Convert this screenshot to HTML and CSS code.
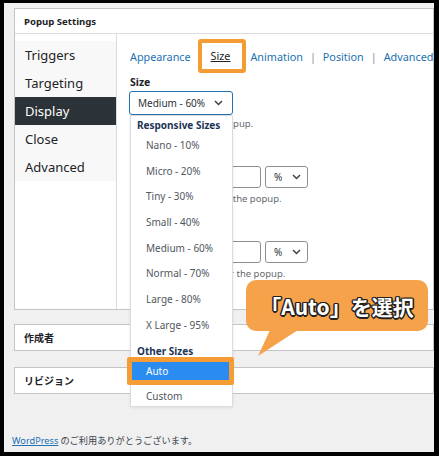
FILE: index.html
```html
<!DOCTYPE html>
<html lang="ja">
<head>
    <meta charset="UTF-8">
    <meta name="viewport" content="width=device-width, initial-scale=1.0">
    <title>Popup Settings</title>
    <link rel="stylesheet" href="styles.css">
</head>
<body>
<div class="screen">
    <div class="postbox settings">
        <div class="postbox-head">Popup Settings</div>
        <div class="settings-body">
            <ul class="side-tabs">
                <li>Triggers</li>
                <li>Targeting</li>
                <li class="active">Display</li>
                <li>Close</li>
                <li>Advanced</li>
            </ul>
            <div class="panel">
                <div class="sub-tabs">
                    <a>Appearance</a>
                    <a class="current">Size</a>
                    <a class="after-current">Animation</a>
                    <span class="sep">|</span>
                    <a>Position</a>
                    <span class="sep">|</span>
                    <a>Advanced</a>
                </div>

                <label class="field-label">Size</label>
                <div class="select-wrap">
                    <div class="select focused">
                        <span>Medium - 60%</span>
                        <svg class="chev" width="9" height="6" viewBox="0 0 9 6"><polyline points="1,1 4.5,4.5 8,1" fill="none" stroke="#3c434a" stroke-width="1.5"/></svg>
                    </div>
                    <ul class="dropdown">
                        <li class="group">Responsive Sizes</li>
                        <li>Nano - 10%</li>
                        <li>Micro - 20%</li>
                        <li>Tiny - 30%</li>
                        <li>Small - 40%</li>
                        <li>Medium - 60%</li>
                        <li>Normal - 70%</li>
                        <li>Large - 80%</li>
                        <li>X Large - 95%</li>
                        <li class="group">Other Sizes</li>
                        <li class="selected">Auto</li>
                        <li>Custom</li>
                    </ul>
                </div>
                <p class="desc">Choose a size of the popup.</p>

                <label class="field-label hidden-label">Width</label>
                <div class="unit-row">
                    <div class="text-input"></div>
                    <div class="select unit">
                        <span>%</span>
                        <svg class="chev" width="9" height="6" viewBox="0 0 9 6"><polyline points="1,1 4.5,4.5 8,1" fill="none" stroke="#3c434a" stroke-width="1.5"/></svg>
                    </div>
                </div>
                <p class="desc">Set a custom width for the popup.</p>

                <label class="field-label hidden-label">Height</label>
                <div class="unit-row">
                    <div class="text-input"></div>
                    <div class="select unit">
                        <span>%</span>
                        <svg class="chev" width="9" height="6" viewBox="0 0 9 6"><polyline points="1,1 4.5,4.5 8,1" fill="none" stroke="#3c434a" stroke-width="1.5"/></svg>
                    </div>
                </div>
                <p class="desc">Set a custom height for the popup.</p>
            </div>
        </div>
    </div>

    <div class="postbox small-box"><h3>作成者</h3></div>
    <div class="postbox small-box"><h3>リビジョン</h3></div>

    <p class="footer"><a>WordPress</a> のご利用ありがとうございます。</p>

    <div class="callout">
        <span>「Auto」を選択</span>
        <svg class="tail" width="44" height="28" viewBox="0 0 44 28"><polygon points="14,0 42,0 2,26" fill="#f6a24a"/></svg>
    </div>
</div>
</body>
</html>
```

FILE: styles.css
```css
* {
    box-sizing: border-box;
}
body {
    margin: 0;
    font-family: "Noto Sans", "Noto Sans CJK JP", sans-serif;
    color: #1d2327;
    background: #000;
}
.screen {
    position: relative;
    width: 439px;
    height: 456px;
    overflow: hidden;
    background-color: #f0f0f1;
    border-style: solid;
    border-color: #000;
    border-width: 3px 5px 4px 4px;
    padding: 5px 0 0 10px;
}
.postbox {
    background-color: #fff;
    border: 1px solid #c3c4c7;
}
.postbox-head {
    height: 25px;
    padding-left: 9px;
    font-size: 9.6px;
    font-weight: 700;
    line-height: 26px;
    border-bottom: 1px solid #dcdcde;
}
.settings-body {
    display: flex;
    height: 275px;
}
.side-tabs {
    flex-shrink: 0;
    list-style: none;
    margin: 0;
    padding: 7px 0 0;
    width: 102px;
    border-right: 1px solid #dcdcde;
}
.side-tabs li {
    height: 28px;
    line-height: 28px;
    padding-left: 10px;
    font-size: 13px;
    background-color: #f8f8f8;
}
.side-tabs li.active {
    background-color: #2c3338;
    color: #fff;
}
.panel {
    flex: 1;
    min-width: 0;
    position: relative;
    padding: 5px 0 0 13px;
}
.sub-tabs {
    display: flex;
    align-items: center;
    height: 34px;
    overflow: hidden;
    font-size: 10.8px;
    white-space: nowrap;
}
.sub-tabs a {
    color: #2271b1;
}
.sub-tabs .sep {
    color: #8c8f94;
    margin: 0 7px;
}
.sub-tabs a.current {
    margin-left: 7px;
    padding: 4px 12px 4px 9px;
    border: 4px solid #f59c35;
    border-radius: 3px;
    color: #1d2327;
    text-decoration: underline;
    line-height: 18px;
}
.sub-tabs a.after-current {
    margin-left: 4px;
}
.field-label {
    display: block;
    margin-top: 2px;
    font-size: 10.5px;
    font-weight: 700;
    line-height: 14px;
}
.hidden-label {
    margin-top: 10px;
}
.select-wrap {
    position: relative;
    width: 104px;
    margin: 2px 0 0 -1px;
}
.select {
    display: flex;
    align-items: center;
    justify-content: space-between;
    height: 24px;
    padding: 0 9px 0 8px;
    border: 1px solid #8c8f94;
    border-radius: 3px;
    background-color: #fff;
    font-size: 10px;
    color: #2c3338;
}
.select.focused {
    border-color: #2271b1;
}
.chev {
    display: block;
}
.dropdown {
    position: absolute;
    top: 24px;
    left: 1px;
    width: 103px;
    height: 292px;
    margin: 0;
    padding: 2px 0 0;
    list-style: none;
    background-color: #fff;
    border: 1px solid #dcdcde;
    box-shadow: 0 1px 3px rgba(0, 0, 0, 0.08);
    z-index: 2;
}
.dropdown li {
    height: 25.7px;
    line-height: 25.7px;
    padding-left: 15px;
    font-size: 10px;
    color: #50575e;
    white-space: nowrap;
}
.dropdown li.group {
    height: 14px;
    line-height: 14px;
    margin: 0 0 1px;
    padding-left: 6px;
    font-weight: 700;
    color: #1d3557;
}
.dropdown li.group:nth-of-type(10) {
    margin-top: 5px;
}
.dropdown li.selected {
    position: relative;
    background-color: #2a8cf0;
    color: #fff;
}
.dropdown li.selected::after {
    content: "";
    position: absolute;
    top: -2px;
    left: -4px;
    right: -2px;
    bottom: -1px;
    border: 5px solid #f59c35;
    border-radius: 2px;
}
.desc {
    margin: 2px 0 0;
    font-size: 9.5px;
    line-height: 14px;
    color: #646970;
    white-space: nowrap;
}
.unit-row {
    display: flex;
    gap: 4px;
    margin-top: 11px;
}
.text-input {
    width: 131px;
    height: 22px;
    border: 1px solid #8c8f94;
    border-radius: 3px;
    background-color: #fff;
}
.select.unit {
    width: 43px;
    height: 22px;
    padding: 0 6px 0 8px;
}
.unit-row + .desc {
    margin-top: 4px;
}
.small-box {
    height: 27px;
    margin-top: 14px;
}
.small-box + .small-box {
    margin-top: 16px;
}
.small-box h3 {
    margin: 0;
    padding-left: 9px;
    font-size: 10px;
    font-weight: 700;
    line-height: 25px;
    font-family: "Noto Sans CJK JP", sans-serif;
}
.footer {
    margin: 39px 0 0 -2px;
    font-size: 9.2px;
    color: #3c434a;
    font-family: "Noto Sans CJK JP", sans-serif;
}
.footer a {
    color: #2271b1;
    text-decoration: underline;
    font-family: "Noto Sans", sans-serif;
}
.callout {
    position: absolute;
    left: 242px;
    top: 277px;
    width: 182px;
    height: 51px;
    border-radius: 10px;
    background-color: #f6a24a;
    display: flex;
    align-items: center;
    justify-content: center;
    z-index: 3;
}
.callout span {
    font-family: "Noto Sans CJK JP", sans-serif;
    font-size: 21px;
    font-weight: 700;
    color: #fff;
    text-shadow: -1.5px 0 #222, 1.5px 0 #222, 0 -1.5px #222, 0 1.5px #222,
        -1px -1px #222, 1px 1px #222, -1px 1px #222, 1px -1px #222;
}
.tail {
    position: absolute;
    left: 10px;
    top: 50px;
}
```
